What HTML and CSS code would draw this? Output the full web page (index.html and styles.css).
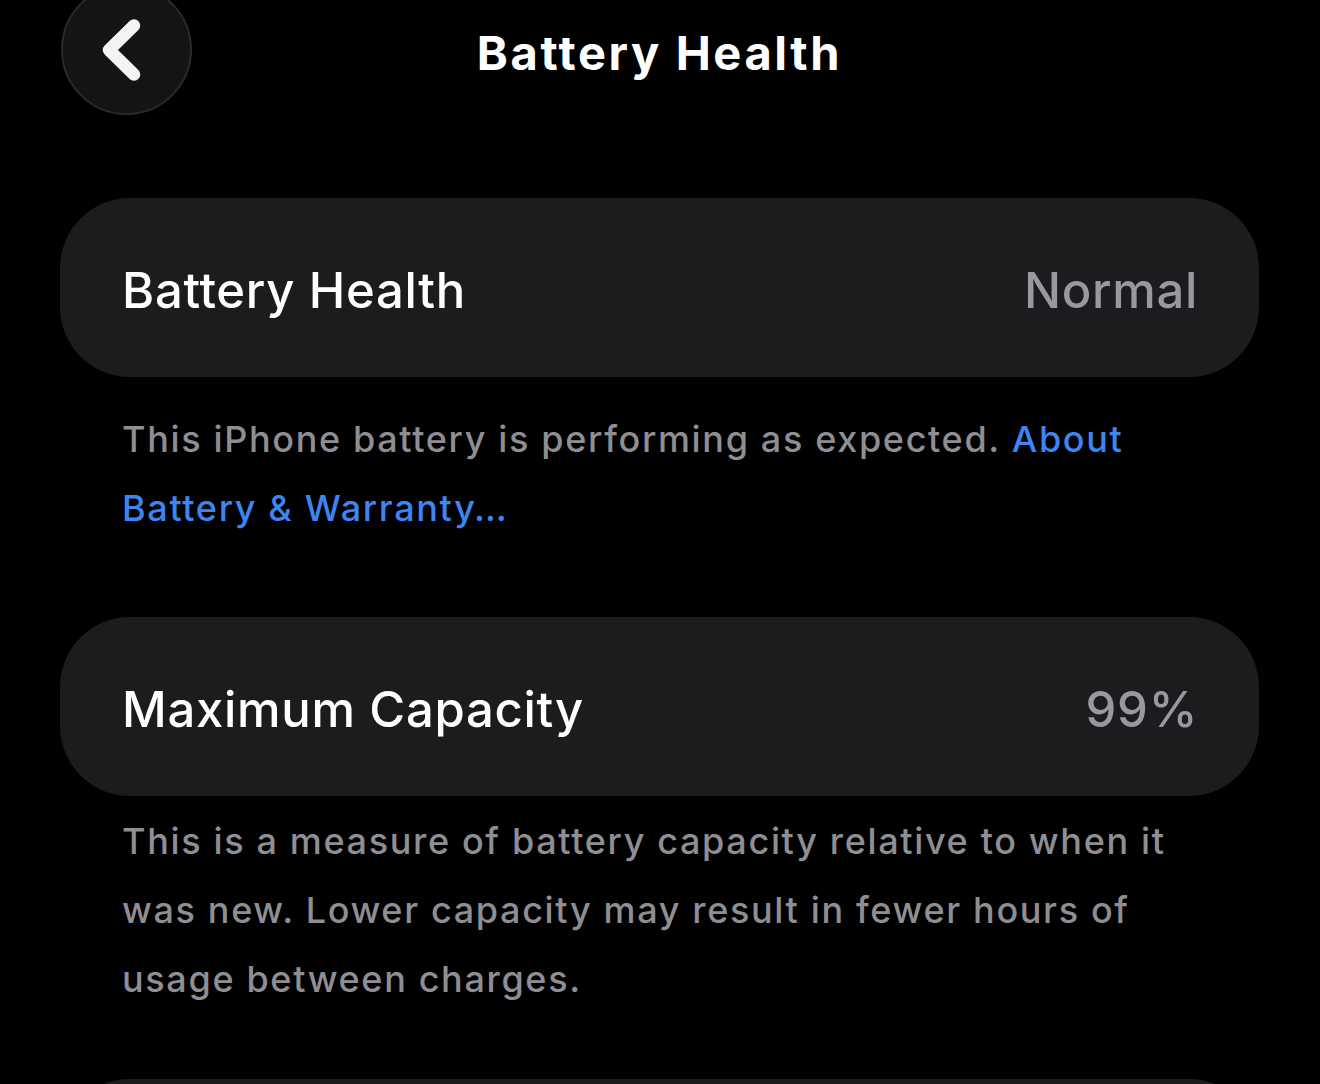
FILE: index.html
```html
<!DOCTYPE html>
<html lang="en">
<head>
    <meta charset="UTF-8">
    <meta name="viewport" content="width=device-width, initial-scale=1.0">
    <title>Battery Health</title>
    <link rel="stylesheet" href="styles.css">
</head>
<body>
    <div class="screen">
        <!-- Nav bar -->
        <header class="nav">
            <button class="back-btn" type="button" aria-label="Back">
                <svg width="60" height="70" viewBox="0 0 60 70">
                    <polyline points="37,10.5 12,35 37,59.5" fill="none" stroke="#f4f4f4" stroke-width="12.5" stroke-linecap="round" stroke-linejoin="round"/>
                </svg>
            </button>
            <h1 class="nav-title">Battery Health</h1>
            <div class="nav-spacer"></div>
        </header>

        <!-- Battery health -->
        <div class="row-card">
            <span class="row-label">Battery Health</span>
            <span class="row-value">Normal</span>
        </div>
        <p class="footnote footnote-health">
            This iPhone battery is performing as expected. <a href="#" class="link">About Battery &amp; Warranty…</a>
        </p>

        <!-- Maximum capacity -->
        <div class="row-card">
            <span class="row-label">Maximum Capacity</span>
            <span class="row-value">99%</span>
        </div>
        <p class="footnote footnote-capacity">
            This is a measure of battery capacity relative to when it was new. Lower capacity may result in fewer hours of usage between charges.
        </p>

        <!-- Next group, scrolled under the fold -->
        <div class="row-card row-card-next"></div>
    </div>
</body>
</html>
```

FILE: styles.css
```css
* {
    margin: 0;
    padding: 0;
    box-sizing: border-box;
}

body {
    background: #000;
    color: #fff;
    font-family: 'Inter', 'Noto Sans', sans-serif;
    overflow: hidden;
}

.screen {
    padding: 0 61px 0 60px;
}

.nav {
    display: grid;
    grid-template-columns: 131px 1fr 131px;
    align-items: center;
    margin-top: -16px;
}

.back-btn {
    width: 131px;
    height: 131px;
    margin-left: 1px;
    border-radius: 50%;
    background: #141414;
    border: 2px solid #2a2a2b;
    display: flex;
    align-items: center;
    justify-content: center;
    cursor: pointer;
}

.nav-title {
    text-align: center;
    font-size: 47px;
    font-weight: 700;
    letter-spacing: 2.6px;
    padding-top: 5px;
}

.row-card {
    height: 179px;
    margin-top: 83px;
    background: #1c1c1e;
    border-radius: 70px;
    display: flex;
    align-items: center;
    justify-content: space-between;
    padding: 6px 61px 0 62px;
}

.row-label,
.row-value {
    font-size: 49px;
    font-weight: 500;
    letter-spacing: 0.7px;
}

.row-label {
    color: #fff;
}

.row-value {
    color: #98989e;
}

.footnote {
    padding: 0 62px;
    font-size: 36px;
    font-weight: 500;
    letter-spacing: 1.65px;
    line-height: 69px;
    color: #8e8e93;
}

.footnote-health {
    margin-top: 28px;
}

.footnote-capacity {
    margin-top: 11px;
}

.footnote-health + .row-card {
    margin-top: 74px;
}

.footnote-capacity + .row-card {
    margin-top: 65px;
}

.link {
    color: #3d86f2;
    text-decoration: none;
}
```
